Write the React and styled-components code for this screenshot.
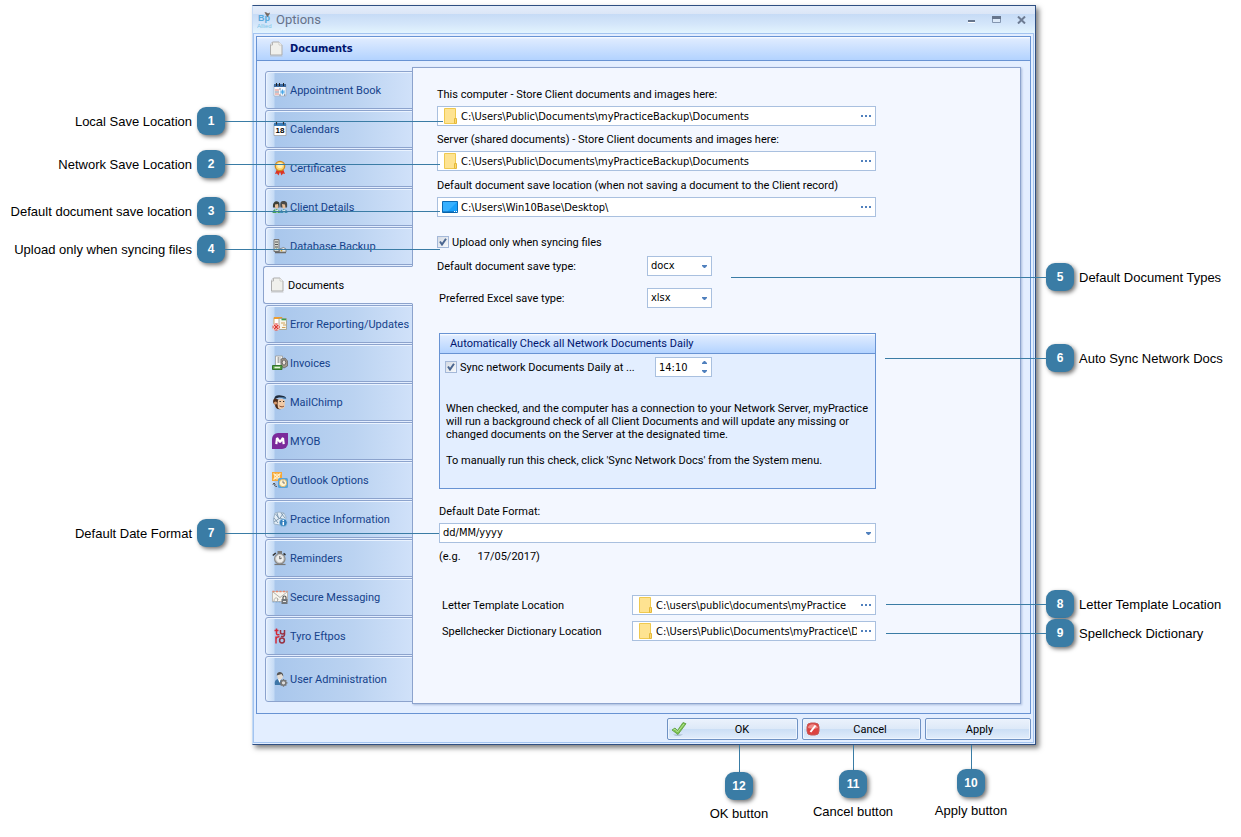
import React from 'react';
import styled, { createGlobalStyle, css } from 'styled-components';

const GlobalStyle = createGlobalStyle`
  * { box-sizing: border-box; }
  body { margin: 0; background: #fff; }
  body, button {
    font-family: Roboto, "DejaVu Sans Condensed", sans-serif;
    font-size: 11px;
    line-height: 14px;
  }
  input, select {
    color: #000;
    font-family: "DejaVu Sans Condensed", "DejaVu Sans", sans-serif;
    font-size: 11px;
    line-height: 14px;
  }
`;

const Page = styled.main`
  display: grid;
  grid-template-columns: 252px minmax(700px, 1fr) 205px;
  padding-top: 5px;
  overflow: hidden;
`;

/* ---------- callouts around the window ---------- */

const Notes = styled.aside`
  position: relative;
  z-index: 2;
  display: flex;
  flex-direction: column;
  pointer-events: none;
`;

const Note = styled.div`
  display: flex;
  align-items: center;
  gap: 5px;
  margin-top: ${(p) => p.$gap}px;
  font-family: "Liberation Sans", Arial, sans-serif;
  font-size: 13px;
  line-height: 16px;
  white-space: nowrap;
  ${(p) =>
    p.$side === 'left'
      ? css`justify-content: flex-end; padding-right: 27px;`
      : css`padding-left: 10px;`}
`;

const NoteText = styled.span`
  padding-top: 2px;
`;

const Badge = styled.span`
  position: relative;
  flex: none;
  width: 28px;
  height: 28px;
  border-radius: 9px;
  background: #3a7ca5;
  box-shadow: 2px 2px 4px rgba(0, 0, 0, 0.55);
  color: #fff;
  font-family: "Liberation Sans", Arial, sans-serif;
  font-size: 12px;
  font-weight: bold;
  line-height: 29px;
  text-align: center;
`;

const Lead = styled.i`
  position: absolute;
  top: 14px;
  height: 1px;
  width: ${(p) => p.$length}px;
  background: #3a7ca5;
  ${(p) => (p.$side === 'left' ? 'left: 100%;' : 'right: 100%;')}
`;

const BottomNotes = styled.aside`
  grid-column: 1 / -1;
  display: flex;
  justify-content: flex-end;
  padding-right: 214px;
`;

const BottomNote = styled.div`
  display: flex;
  flex-direction: column;
  align-items: center;
  width: ${(p) => p.$width}px;
  font-family: "Liberation Sans", Arial, sans-serif;
  font-size: 13px;
  line-height: 16px;
  white-space: nowrap;
`;

const Stem = styled.i`
  width: 1px;
  height: ${(p) => p.$length}px;
  background: #3a7ca5;
`;

const Caption = styled.span`
  margin-top: 6px;
`;

/* ---------- window ---------- */

const Window = styled.section`
  background: #e3eeff;
  border: 1px solid #2f4f82;
  border-left-color: #c4daf5;
  box-shadow: 3px 3px 5px rgba(0, 0, 0, 0.5);
`;

const TitleBar = styled.header`
  display: flex;
  align-items: center;
  height: 27px;
  padding: 0 1px 0 4px;
  background: linear-gradient(#e4edfa 0, #dbe6f7 8px, #c6dbf6 8px, #d4e6fa 18px, #e3f4fe 100%);
  color: #66728a;
`;

const Title = styled.h1`
  flex: 1;
  margin: 0 0 0 3px;
  font-size: 13px;
  font-weight: normal;
  line-height: 16px;
`;

const WindowButton = styled.button`
  display: flex;
  width: 25px;
  height: 20px;
  align-items: center;
  justify-content: center;
  padding: 0;
  border: 0;
  background: none;
`;

const Body = styled.div`
  margin-right: 1px;
  margin-bottom: 1px;
  padding: 2px;
  border: 1px solid #a3c4f0;
`;

const Frame = styled.div`
  border: 1px solid #6893d3;
`;

const FrameHeader = styled.h2`
  display: flex;
  align-items: center;
  gap: 5px;
  height: 24px;
  margin: 0;
  padding-left: 12px;
  border-bottom: 1px solid #6893d3;
  background: linear-gradient(#fff 0, #deebff 2px, #b3d3ff 100%);
  color: #00156e;
  font-family: "DejaVu Sans Condensed", "DejaVu Sans", sans-serif;
  font-size: 11px;
`;

const FrameContent = styled.div`
  display: flex;
  padding: 6px 9px 9px 6px;
`;

const TabList = styled.nav`
  position: relative;
  z-index: 1;
  display: flex;
  flex: none;
  flex-direction: column;
  gap: 1px;
  width: 150px;
  margin-right: -1px;
  padding: 4px 0 2px;
`;

const Tab = styled.button`
  display: flex;
  align-items: center;
  gap: 2px;
  height: ${(p) => (p.$last ? 46 : 38)}px;
  margin-left: 2px;
  padding: 0 0 0 6px;
  border: 1px solid #8ca3cd;
  border-radius: 3px 0 0 3px;
  background: linear-gradient(90deg, #e4effd 0, #c5dbf5 8px, #a9c7ec 9px, #bbd3f1 60%, #d0e1f9 100%);
  box-shadow: inset 1px 1px 0 #eaf3ff;
  color: #15428b;
  text-align: left;
  white-space: nowrap;
  ${(p) =>
    p.$active &&
    css`
      margin-left: 0;
      border-right-color: #f3f7ff;
      background: #f3f7ff;
      box-shadow: none;
      color: #000;
    `}
`;

const ButtonText = styled.span`
  flex: 1;
  padding-top: 2px;
`;

const Panel = styled.div`
  flex: 1;
  min-width: 0;
  padding: 20px 144px 0 24px;
  border: 1px solid #8ca3cd;
  background: #f3f7ff;
  box-shadow: 1px 1px 2px #a9bcdc;
`;

const Footer = styled.footer`
  display: flex;
  justify-content: flex-end;
  gap: 4px;
  padding: 4px 0 0;
`;

const ActionButton = styled.button`
  display: flex;
  align-items: center;
  width: ${(p) => p.$width}px;
  height: 22px;
  padding: 0 0 0 3px;
  border: 1px solid #6f92c4;
  border-radius: 2px;
  background: linear-gradient(#ebf2fc 0, #dde9f8 50%, #cbdef5 50%, #e2edfb 100%);
  box-shadow: inset 0 0 0 1px #eef5fe;
  color: #000;
`;

/* ---------- form ---------- */

const Stack = styled.div`
  display: flex;
  flex-direction: column;
  gap: ${(p) => p.$gap || 0}px;
  margin-top: ${(p) => p.$top || 0}px;
  padding-left: ${(p) => p.$inset || 0}px;
`;

const Field = styled.div`
  display: flex;
  flex-direction: column;
  gap: 4px;
`;

const Label = styled.label`
  white-space: nowrap;
`;

const Row = styled.div`
  display: grid;
  grid-template-columns: ${(p) => p.$columns};
  align-items: center;

  > label { padding-top: 2px; }
`;

const Box = styled.div`
  position: relative;
  display: flex;
  align-items: center;
  height: 20px;
  padding-left: ${(p) => (p.$plain ? 0 : 4)}px;
  border: 1px solid #a9c0df;
  background: #fff;

  > svg { flex: none; }
`;

const TextInput = styled.input`
  flex: 1;
  min-width: 0;
  height: 18px;
  padding: 0 0 0 3px;
  border: 0;
  outline: 0;
  background: transparent;
`;

const Browse = styled.button`
  display: flex;
  flex: none;
  align-items: center;
  justify-content: center;
  width: 18px;
  height: 18px;
  padding: 0;
  border: 0;
  background: none;
`;

const Select = styled.select`
  width: 100%;
  height: 18px;
  padding: 0 3px;
  border: 0;
  outline: 0;
  appearance: none;
  background: transparent;
`;

const Arrow = styled.svg`
  position: absolute;
  right: 4px;
  top: 8px;
  pointer-events: none;
`;

const CheckLine = styled.label`
  display: flex;
  align-items: center;
  gap: 3px;
  height: 16px;
  white-space: nowrap;
`;

const CheckFrame = styled.span`
  position: relative;
  display: flex;
  width: 12px;
  height: 12px;

  svg { position: absolute; left: 2px; top: 2px; pointer-events: none; }
`;

const CheckInput = styled.input`
  width: 12px;
  height: 12px;
  margin: 0;
  appearance: none;
  border: 1px solid #a4b8d8;
  background: linear-gradient(135deg, #d5dbe4, #f8fafc);
`;

const Group = styled.section`
  min-height: 156px;
  border: 1px solid #6893d3;
  background: #e3eeff;
`;

const GroupTitle = styled.h3`
  height: 20px;
  margin: 0;
  padding: 3px 10px 0;
  border-bottom: 1px solid #6893d3;
  background: linear-gradient(#fff 0, #deebff 2px, #b3d3ff 100%);
  color: #00156e;
  font-size: 11px;
  font-weight: normal;
`;

const GroupRow = styled.div`
  display: grid;
  grid-template-columns: 210px 57px;
  align-items: center;
  padding: 3px 5px 0;
`;

const Steps = styled.span`
  display: flex;
  flex: none;
  flex-direction: column;
  width: 14px;
`;

const Step = styled.button`
  display: flex;
  align-items: center;
  justify-content: center;
  height: 9px;
  padding: 0;
  border: 0;
  background: none;
`;

const Paragraph = styled.p`
  margin: ${(p) => p.$top}px 0 0;
  padding-left: 6px;
  line-height: 13px;
  white-space: nowrap;
`;

const Example = styled.p`
  display: flex;
  gap: 17px;
  margin: 7px 0 0;
`;

/* ---------- drawings ---------- */

const Svg = ({ children, size = 16 }) => (
  <svg width={size} height={size} viewBox="0 0 16 16" aria-hidden="true">{children}</svg>
);

const PageIcon = () => (
  <Svg>
    <path d="M1.500 3.500l2-2.500h6.500l3 3v10h-11.500z" fill="#f0f0ec" stroke="#adadad" />
    <path d="M1.500 4h2V1" fill="#fff" stroke="#b5b5b5" />
    <path d="M10 1v3h3" fill="#fff" stroke="#c4c4c0" strokeWidth=".8" />
    <path d="M1 15h12.500" stroke="#bbb" strokeWidth=".8" />
  </Svg>
);

const AppointmentIcon = () => (
  <Svg>
    <path d="M2 3h12v11H2z" fill="#f6f8fc" stroke="#a8b0bf" strokeWidth=".7" />
    <path d="M2 2h12v3H2z" fill="#3d6aa0" />
    <path d="M4.500 1v3M7.500 1v3M11.500 1v3" stroke="#222" strokeWidth="1" />
    <path d="M3.500 8h1M5.500 8h1M3.500 12h1M5.500 12h1" stroke="#e25a4c" strokeWidth="1.300" />
    <path d="M3.500 10h1M5.500 10h1M7.500 7h1M7.500 13h1M12.200 13h1" stroke="#5c6c86" strokeWidth="1.300" />
    <path d="M10.500 7.500v5M8 10h5M8.800 8.300l3.400 3.400M12.200 8.300l-3.400 3.400" stroke="#45a4e6" strokeWidth=".9" />
  </Svg>
);

const CalendarIcon = () => (
  <Svg>
    <path d="M2 3h12v11.500H2z" fill="#fff" stroke="#999" strokeWidth=".7" />
    <path d="M2 2h12v3H2z" fill="#3b7db9" />
    <path d="M4.500 1v2.500M11.500 1v2.500" stroke="#333" strokeWidth="1.200" />
    <text x="8" y="12" textAnchor="middle" fontFamily="Liberation Sans, sans-serif" fontWeight="bold" fontSize="8">18</text>
  </Svg>
);

const CertificateIcon = () => (
  <Svg>
    <path d="M5 9l-2 5 2-.500L6.500 15.500 8 12l1.500 3.500 1.500-2 2 .500-2-5z" fill="#dd3322" />
    <circle cx="8" cy="6" r="4.700" fill="#ffd66e" stroke="#d08a20" strokeWidth="1.300" />
    <circle cx="8" cy="5.500" r="2.700" fill="#fff0b8" />
  </Svg>
);

const ClientsIcon = () => (
  <Svg>
    <path d="M.5 14c0-5.500 7.500-5.500 7.500 0z" fill="#47a55a" />
    <path d="M8 14c0-5.500 7.500-5.500 7.500 0z" fill="#418fb5" />
    <path d="M1 8.500C0 1 7.500 1 7.500 5v3.500z" fill="#3c4038" />
    <path d="M8.500 8.500c-1-6 1-6.500 3-6.500 3.500 0 4 2 3.500 6.500z" fill="#4a4a48" />
    <path d="M3 5.500l3-.5.500 3L5 10 3 8.500zM10 5l3 .5.500 3L12 10l-1.500-1.500z" fill="#e5bd98" />
    <path d="M3.500 10.500L5 13l1.200-2.500M10.500 10.500L12 13l1.200-2.500" stroke="#eef4f0" fill="none" strokeWidth="1.200" />
  </Svg>
);

const DatabaseIcon = () => (
  <Svg>
    <path d="M2 1.500h5v12H2z" fill="#d6d8d2" stroke="#777" />
    <path d="M3 4h3M3 6.500h3M3 9h3" stroke="#555" strokeWidth="1.200" />
    <circle cx="4.500" cy="11.300" r=".8" fill="#36a336" />
    <path d="M3 14.500h11" stroke="#666" strokeWidth="1.500" />
    <path d="M7.500 11l4-1.500 2.500 1.500v3h-6.500z" fill="#ededeb" stroke="#777" strokeWidth=".8" />
    <circle cx="9.500" cy="12.600" r=".9" fill="#cda336" />
  </Svg>
);

const ErrorIcon = () => (
  <Svg>
    <path d="M2 1.500h8v9H2z" fill="#fff" stroke="#cf9a43" strokeWidth=".8" />
    <path d="M2 2h8" stroke="#ec9c31" strokeWidth="2" />
    <path d="M7 2.500h7.500v11H7z" fill="#f7f6ea" stroke="#9c9c88" strokeWidth=".8" />
    <path d="M9.500 3.500H14" stroke="#37a050" strokeWidth="1.600" />
    <path d="M9 7h4M11 9h3M10 11.500h3.500" stroke="#d3a256" />
    <circle cx="4.200" cy="11" r="3.800" fill="#e46a60" />
    <path d="M1.500 8.300l5.400 5.400M6.900 8.300l-5.400 5.400" stroke="#fff" strokeWidth="2.600" />
    <path d="M2 8.800l4.400 4.400M6.400 8.800L2 13.200" stroke="#d93830" strokeWidth="1.400" />
  </Svg>
);

const InvoiceIcon = () => (
  <Svg>
    <path d="M3.500 1h7v10h-7z" fill="#f7f7f4" stroke="#999" strokeWidth=".8" />
    <path d="M5 3h4M5 5h4M5 7h4M6.500 2v6" stroke="#999" strokeWidth=".7" />
    <path d="M9 4l4-1 2.500 3v5L12 13l-3-2z" fill="#a69a8c" stroke="#666" strokeWidth=".8" />
    <ellipse cx="12" cy="7.500" rx="1.800" ry="2.600" fill="#e9e2da" stroke="#555" strokeWidth=".8" />
    <path d="M.5 10.500h9.500v4H.5z" fill="#58a045" stroke="#34742e" />
    <path d="M2.500 12.500h5.500" stroke="#e6f4dc" strokeWidth="1.500" />
  </Svg>
);

const MailChimpIcon = () => (
  <Svg>
    <path d="M3 4C0 6 1 10 3 10.500c0 4 3 5.500 6 4.500l-2-9z" fill="#4d2c19" />
    <path d="M6 6c3-2 7-1 7 2l-.5 2c1 2 0 5-3.500 5S6 13 5.500 10z" fill="#f0c9a5" />
    <path d="M2.500 5C2 2 5 .5 9 1.500s5 1 5 3C10 3 6 3 2.500 5z" fill="#1f2c3e" />
    <path d="M8 3l5.500.5 1 1.500-3-.3z" fill="#4279a8" />
    <path d="M7.500 7.500h1.300M11 7.500h1.200" stroke="#222" strokeWidth="1.200" />
    <path d="M7.500 12c2 1.200 3.500 1 4.500 0" stroke="#7d4128" fill="none" strokeWidth=".9" />
    <circle cx="3.500" cy="9" r="1.600" fill="#d79a6c" />
  </Svg>
);

const MyobIcon = () => (
  <Svg>
    <path d="M6 0h10v10a6 6 0 0 1-6 6H0V6a6 6 0 0 1 6-6z" fill="#7b2a9b" />
    <path d="M4.300 11.200L5 5l3 4.200L11 5l.7 6.200" fill="none" stroke="#fff" strokeWidth="2.200" strokeLinejoin="bevel" />
  </Svg>
);

const OutlookIcon = () => (
  <Svg>
    <path d="M0 0h10v9H0z" fill="#f5a93b" />
    <path d="M1.500 1.500l7 6M8.500 1.500l-7 6" stroke="#fff1cd" strokeWidth="1.200" />
    <circle cx="5" cy="4.500" r="2.500" fill="none" stroke="#fff1cd" />
    <path d="M5 14.500c-2 0-3-1-3-3M.8 12.500L2 11l1.500 1.500" stroke="#555" fill="none" />
    <rect x="6" y="6" width="10" height="10" rx="1.500" fill="#57a3da" />
    <circle cx="11" cy="11" r="3.700" fill="#fff3cf" stroke="#e0b355" strokeWidth=".8" />
    <path d="M11 8.500V11h2" stroke="#666" fill="none" strokeWidth=".8" />
  </Svg>
);

const PracticeIcon = () => (
  <Svg>
    <path d="M3 2l4-1 5 1 2 4-1 6-5 2-6-1-.5-5z" fill="#e3edf5" stroke="#93a9bf" strokeWidth=".8" />
    <path d="M3.500 3l4 5 4-6M2 11l6-4 5 2M5 2l1.500 5M9 2l4 5M2 7l4 5" stroke="#7793ad" fill="none" strokeWidth=".9" />
    <circle cx="11.300" cy="11.700" r="4" fill="#327fbd" stroke="#b7d7ee" strokeWidth=".7" />
    <path d="M11.300 8.800v1.500M11.300 11v3.200" stroke="#fff" strokeWidth="1.500" />
  </Svg>
);

const ReminderIcon = () => (
  <Svg>
    <path d="M5.500 1h4.500v3H5.500z" fill="#777" />
    <path d="M.8 5.500l3-2.500M13.500 5l-2-1.500" stroke="#333" strokeWidth="1.600" />
    <circle cx="7.800" cy="9" r="5.800" fill="#8a8a88" />
    <circle cx="7.800" cy="8.700" r="4.200" fill="#eeeeec" stroke="#c4c4c4" />
    <path d="M7.800 6v3l2-1" stroke="#555" fill="none" strokeWidth=".9" />
    <path d="M2.500 14.500h11" stroke="#777" strokeWidth="1.200" />
  </Svg>
);

const MessageIcon = () => (
  <Svg>
    <path d="M.5 2.500h15v10H.5z" fill="#f8f5ee" stroke="#b5a89a" strokeWidth=".7" />
    <path d="M.5 2.500h15" stroke="#e9856c" strokeDasharray="2 1.500" strokeWidth="1.300" />
    <path d="M1 3l7 5.500L15 3M2 12c0-4 4-4 4-1M5.500 9v3.500" stroke="#b3b3ae" fill="none" />
    <path d="M.5 13h8" stroke="#7ba5cd" strokeDasharray="2 1" strokeWidth="1" />
    <path d="M9.500 10h6v5h-6z" fill="#70757a" />
    <path d="M11 10V8.500a1.500 1.500 0 0 1 3 0V10" fill="none" stroke="#555" strokeWidth="1.200" />
    <path d="M11 12.500h3" stroke="#e8e8e8" />
  </Svg>
);

const TyroIcon = () => (
  <Svg>
    <path d="M4.500 .5v5c0 1.500 1.500 1.500 3 1M2.500 2.500h4" fill="none" stroke="#d42a38" strokeWidth="1.500" />
    <path d="M8.500 2v2.500c0 2 4 2 4 0V2v4.500c0 2-2 2.500-3.500 1.500" fill="none" stroke="#983142" strokeWidth="1.500" />
    <path d="M4 15.500V8.500M4 11c.5-2 2-2.500 3.500-2" fill="none" stroke="#d42a38" strokeWidth="1.500" />
    <circle cx="10" cy="12.500" r="2.400" fill="none" stroke="#983142" strokeWidth="1.500" />
  </Svg>
);

const UserIcon = () => (
  <Svg>
    <path d="M3 14c-1-4 1-6 4-6s5 2 5 6z" fill="#3d76a8" />
    <path d="M6 8l1.500 4L9 8z" fill="#fff" />
    <path d="M5 4.500C5 0 11.500 0 11 5.500L10 8 8 8.800 6 7.500z" fill="#e3dcd4" />
    <path d="M4.800 4.500C4.500-.5 12 0 11.200 5.500L9.500 3z" fill="#555" />
    <circle cx="11.500" cy="11.800" r="2.400" fill="#ddd" stroke="#777" strokeWidth="1.500" />
    <path d="M11.500 8v1.500M11.500 14.200v1.500M7.700 11.800h1.500M14 11.800h1.500M8.800 9.100l1 1M13.300 13.500l1 1M14.300 9.100l-1 1M9.700 13.500l-1 1" stroke="#777" strokeWidth="1.300" />
  </Svg>
);

const FolderIcon = () => (
  <Svg>
    <path d="M2.500.5h11v15h-11z" fill="#fee391" stroke="#efc94f" />
    <path d="M12.500 10.500h2v5h-2z" fill="#fdd870" stroke="#e4b93a" />
  </Svg>
);

const DesktopIcon = () => (
  <Svg>
    <path d="M.5 2.500h15v11H.5z" fill="#18a0fb" stroke="#0b6ab5" />
    <path d="M1 3h14L5 13H1z" fill="#36b0ff" />
    <path d="M1 13h12" stroke="#075a9e" />
    <path d="M12 12.500h1M14 12.500h1" stroke="#fff" />
  </Svg>
);

const LogoIcon = () => (
  <svg width="16" height="18" viewBox="0 0 16 18" aria-hidden="true">
    <text x="1" y="10" fontFamily="Liberation Sans, sans-serif" fontWeight="bold" fontSize="9" fill="#59a9dc">Bp</text>
    <path d="M7.500 1l2 .5 1.500 1L13 1.500l-.5 1.800L10.500 6 9 4z" fill="#74675f" />
    <text x="0" y="17" fontFamily="Liberation Sans, sans-serif" fontSize="6" fill="#79c4e8">Allied</text>
  </svg>
);

const CheckIcon = () => (
  <Svg>
    <path d="M2 13.500c2 2 8 1.500 10 0z" fill="#9fb4c8" />
    <path d="M1 9l3-2 2.500 2.500L12 1.500l3 1.200L7 13.500z" fill="#7cc250" stroke="#5a9c3a" strokeWidth=".8" />
    <path d="M2.500 9l1.500-.8 2.500 2.800L13 3" fill="none" stroke="#b7e595" />
  </Svg>
);

const StopIcon = () => (
  <svg width="14" height="14" viewBox="0 0 14 14" aria-hidden="true">
    <rect x="1" y="1" width="12" height="12" rx="4" fill="#dc4340" stroke="#c65a58" />
    <path d="M2 6c0-5 9-5 10 0-3 1-7 1-10 0z" fill="#ef8d89" />
    <path d="M4.500 10l5-6.500" stroke="#fff" strokeWidth="2" />
  </svg>
);

const Tick = () => (
  <svg width="8" height="8" viewBox="0 0 8 8" aria-hidden="true">
    <path d="M1 3.500l2 3L7 .8" fill="none" stroke="#4b6690" strokeWidth="2" />
  </svg>
);

const Dots = () => (
  <svg width="10" height="2" viewBox="0 0 10 2" aria-hidden="true">
    <path d="M0 0h2v2H0zM4 0h2v2H4zM8 0h2v2H8z" fill="#5080bd" />
  </svg>
);

const DownArrow = () => (
  <Arrow width="5" height="3" viewBox="0 0 5 3" aria-hidden="true"><path d="M0 0h5v1L3 3H2L0 1z" fill="#5080bd" /></Arrow>
);

/* ---------- pieces ---------- */

const TABS = [
  ['Appointment Book', AppointmentIcon],
  ['Calendars', CalendarIcon],
  ['Certificates', CertificateIcon],
  ['Client Details', ClientsIcon],
  ['Database Backup', DatabaseIcon],
  ['Documents', PageIcon],
  ['Error Reporting/Updates', ErrorIcon],
  ['Invoices', InvoiceIcon],
  ['MailChimp', MailChimpIcon],
  ['MYOB', MyobIcon],
  ['Outlook Options', OutlookIcon],
  ['Practice Information', PracticeIcon],
  ['Reminders', ReminderIcon],
  ['Secure Messaging', MessageIcon],
  ['Tyro Eftpos', TyroIcon],
  ['User Administration', UserIcon],
];

const LEFT_NOTES = [
  [1, 'Local Save Location', 102, 218],
  [2, 'Network Save Location', 15, 215],
  [3, 'Default document save location', 19, 215],
  [4, 'Upload only when syncing files', 10, 215],
  [7, 'Default Date Format', 256, 214],
];

const RIGHT_NOTES = [
  [5, 'Default Document Types', 258, 315],
  [6, 'Auto Sync Network Docs', 53, 161],
  [8, 'Letter Template Location', 218, 160],
  [9, 'Spellcheck Dictionary', 1, 160],
];

const BOTTOM_NOTES = [
  [12, 'OK button', 104, 27],
  [11, 'Cancel button', 124, 25],
  [10, 'Apply button', 112, 24],
];

const PathBox = ({ id, value, icon: Icon = FolderIcon }) => (
  <Box>
    <Icon />
    <TextInput id={id} defaultValue={value} />
    <Browse type="button" aria-label="Browse"><Dots /></Browse>
  </Box>
);

const PathField = ({ id, label, ...rest }) => (
  <Field>
    <Label htmlFor={id}>{label}</Label>
    <PathBox id={id} {...rest} />
  </Field>
);

const SelectBox = ({ id, value }) => (
  <Box $plain>
    <Select id={id} defaultValue={value}><option>{value}</option></Select>
    <DownArrow />
  </Box>
);

const Check = ({ children }) => (
  <CheckLine>
    <CheckFrame><CheckInput type="checkbox" defaultChecked /><Tick /></CheckFrame>
    <ButtonText>{children}</ButtonText>
  </CheckLine>
);

export default function App() {
  return (
    <>
      <GlobalStyle />
      <Page>
        <Notes>
          {LEFT_NOTES.map(([n, text, gap, length]) => (
            <Note key={n} $gap={gap} $side="left">
              <NoteText>{text}</NoteText>
              <Badge>{n}<Lead $side="left" $length={length} /></Badge>
            </Note>
          ))}
        </Notes>

        <Window>
          <TitleBar>
            <LogoIcon />
            <Title>Options</Title>
            <WindowButton aria-label="Minimize">
              <svg width="8" height="8" viewBox="0 0 8 8"><path d="M0 4h7v2H0z" fill="#66758c" /><path d="M0 6h7v1H0z" fill="#fff" /></svg>
            </WindowButton>
            <WindowButton aria-label="Maximize">
              <svg width="9" height="8" viewBox="0 0 9 8"><path d="M.5 .5h8v6h-8z" fill="#dce9f8" stroke="#8496b0" /><path d="M0 0h9v3H0z" fill="#66758c" /></svg>
            </WindowButton>
            <WindowButton aria-label="Close">
              <svg width="9" height="8" viewBox="0 0 9 8"><path d="M1 .5l7 7M8 .5l-7 7" stroke="#6d7b92" strokeWidth="2" /></svg>
            </WindowButton>
          </TitleBar>
          <Body>
            <Frame>
              <FrameHeader><PageIcon />Documents</FrameHeader>
              <FrameContent>
                <TabList>
                  {TABS.map(([name, Icon], i) => (
                    <Tab key={name} type="button" $active={name === 'Documents'} $last={i === TABS.length - 1}>
                      <Icon />
                      <ButtonText>{name}</ButtonText>
                    </Tab>
                  ))}
                </TabList>
                <Panel>
                  <Stack $gap={7}>
                    <PathField id="local" label="This computer - Store Client documents and images here:" value="C:\Users\Public\Documents\myPracticeBackup\Documents" />
                    <PathField id="server" label="Server (shared documents) - Store Client documents and images here:" value="C:\Users\Public\Documents\myPracticeBackup\Documents" />
                  </Stack>
                  <Stack $top={8}>
                    <PathField id="desktop" label="Default document save location (when not saving a document to the Client record)" value="C:\Users\Win10Base\Desktop\" icon={DesktopIcon} />
                  </Stack>
                  <Stack $gap={6} $top={17}>
                    <Check>Upload only when syncing files</Check>
                    <Row $columns="210px 65px">
                      <Label htmlFor="doctype">Default document save type:</Label>
                      <SelectBox id="doctype" value="docx" />
                    </Row>
                  </Stack>
                  <Stack $top={12} $inset={2}>
                    <Row $columns="208px 65px">
                      <Label htmlFor="xltype">Preferred Excel save type:</Label>
                      <SelectBox id="xltype" value="xlsx" />
                    </Row>
                  </Stack>
                  <Stack $top={25} $inset={2}>
                    <Group>
                      <GroupTitle>Automatically Check all Network Documents Daily</GroupTitle>
                      <GroupRow>
                        <Check>Sync network Documents Daily at ...</Check>
                        <Box $plain>
                          <TextInput aria-label="Sync time" defaultValue="14:10" />
                          <Steps>
                            <Step type="button" aria-label="Later"><svg width="5" height="3" viewBox="0 0 5 3"><path d="M2 0h1l2 2v1H0V2z" fill="#5080bd" /></svg></Step>
                            <Step type="button" aria-label="Earlier"><svg width="5" height="3" viewBox="0 0 5 3"><path d="M0 0h5v1L3 3H2L0 1z" fill="#5080bd" /></svg></Step>
                          </Steps>
                        </Box>
                      </GroupRow>
                      <Paragraph $top={25}>
                        When checked, and the computer has a connection to your Network Server, myPractice<br />
                        will run a background check of all Client Documents and will update any missing or<br />
                        changed documents on the Server at the designated time.
                      </Paragraph>
                      <Paragraph $top={13}>
                        To manually run this check, click 'Sync Network Docs' from the System menu.
                      </Paragraph>
                    </Group>
                  </Stack>
                  <Stack $top={16} $inset={2}>
                    <Field>
                      <Label htmlFor="dateformat">Default Date Format:</Label>
                      <SelectBox id="dateformat" value="dd/MM/yyyy" />
                    </Field>
                    <Example><span>(e.g.</span><span>17/05/2017)</span></Example>
                  </Stack>
                  <Stack $gap={6} $top={31} $inset={5}>
                    <Row $columns="190px 1fr">
                      <Label htmlFor="letters">Letter Template Location</Label>
                      <PathBox id="letters" value="C:\users\public\documents\myPractice" />
                    </Row>
                    <Row $columns="190px 1fr">
                      <Label htmlFor="spelling">Spellchecker Dictionary Location</Label>
                      <PathBox id="spelling" value="C:\Users\Public\Documents\myPractice\Dictionary" />
                    </Row>
                  </Stack>
                </Panel>
              </FrameContent>
            </Frame>
            <Footer>
              <ActionButton type="button" $width={131}><CheckIcon /><ButtonText>OK</ButtonText></ActionButton>
              <ActionButton type="button" $width={119}><StopIcon /><ButtonText>Cancel</ButtonText></ActionButton>
              <ActionButton type="button" $width={106}><ButtonText>Apply</ButtonText></ActionButton>
            </Footer>
          </Body>
        </Window>

        <Notes>
          {RIGHT_NOTES.map(([n, text, gap, length]) => (
            <Note key={n} $gap={gap} $side="right">
              <Badge>{n}<Lead $side="right" $length={length} /></Badge>
              <NoteText>{text}</NoteText>
            </Note>
          ))}
        </Notes>

        <BottomNotes>
          {BOTTOM_NOTES.map(([n, text, width, length]) => (
            <BottomNote key={n} $width={width}>
              <Stem $length={length} />
              <Badge>{n}</Badge>
              <Caption>{text}</Caption>
            </BottomNote>
          ))}
        </BottomNotes>
      </Page>
    </>
  );
}
